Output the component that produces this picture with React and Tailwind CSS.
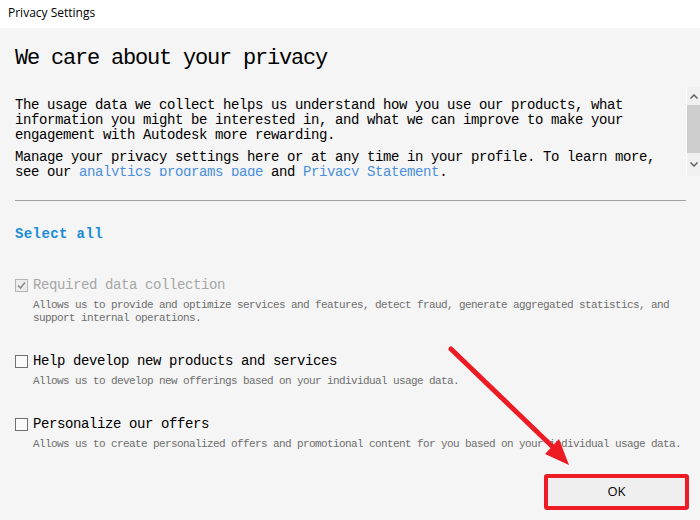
import React from "react";

const mono = { fontFamily: '"Liberation Mono", "DejaVu Sans Mono", monospace' };

function Check({ checked, disabled }) {
  return (
    <div
      className={
        "w-[13px] h-[13px] shrink-0 border flex items-center justify-center " +
        (disabled ? "border-[#b4b4b4] bg-[#ececec]" : "border-[#707070] bg-[#fafafa]")
      }
    >
      {checked && (
        <svg width="9" height="9" viewBox="0 0 9 9">
          <path d="M1 4.5 L3.5 7 L8 1.5" fill="none" stroke="#8c8c8c" strokeWidth="1.6" />
        </svg>
      )}
    </div>
  );
}

function Row({ label, desc, checked, disabled, className, descClass }) {
  return (
    <div className={className}>
      <div className="flex items-center gap-[5px]">
        <Check checked={checked} disabled={disabled} />
        <span
          className={
            "text-[14px] leading-[16px] tracking-[-0.4px] whitespace-pre " +
            (disabled ? "text-[#a6a6a6]" : "text-black")
          }
          style={mono}
        >
          {label}
        </span>
      </div>
      <div className={"pl-[18px] " + descClass}>
        {desc.map((d, i) => (
          <div
            key={i}
            className="text-[11px] leading-[13px] tracking-[-0.6px] text-[#6e6e6e] whitespace-pre"
            style={mono}
          >
            {d}
          </div>
        ))}
      </div>
    </div>
  );
}

export default function App() {
  const link = "text-[#4a8fdc]";
  return (
    <div className="w-[700px] h-[520px] relative overflow-hidden bg-[#f5f5f5]">
      <div className="h-[28px] bg-white flex items-center pl-[8px] pb-[2px]">
        <span
          className="text-[12px] text-black"
          style={{ fontFamily: '"Open Sans", "Noto Sans", sans-serif' }}
        >
          Privacy Settings
        </span>
      </div>

      <div className="pl-[15px]">
        <div
          className="mt-[19px] text-[22px] leading-[24px] tracking-[-1.2px] text-black whitespace-pre"
          style={mono}
        >
          We care about your privacy
        </div>

        <div className="mt-[16px] h-[89px] flex overflow-hidden">
          <div
            className="flex-1 pt-[11px] text-[14px] leading-[15px] tracking-[-0.4px] text-black overflow-hidden"
            style={mono}
          >
            <div className="whitespace-pre">
              The usage data we collect helps us understand how you use our products, what
            </div>
            <div className="whitespace-pre">
              information you might be interested in, and what we can improve to make your
            </div>
            <div className="whitespace-pre">engagement with Autodesk more rewarding.</div>
            <div className="mt-[7px] whitespace-pre">
              Manage your privacy settings here or at any time in your profile. To learn more,
            </div>
            <div className="whitespace-pre">
              see our <span className={link}>analytics programs page</span> and{" "}
              <span className={link}>Privacy Statement</span>.
            </div>
          </div>
          <div className="w-[14px] h-[89px] bg-[#f0f0f0] border-l border-white flex flex-col">
            <div className="h-[18px] flex items-center justify-center">
              <svg width="8" height="5" viewBox="0 0 8 5">
                <path d="M0.5 4.5 L4 1 L7.5 4.5" fill="none" stroke="#606060" strokeWidth="1.5" />
              </svg>
            </div>
            <div className="h-[48px] bg-[#cdcdcd]" />
            <div className="flex-1 flex items-center justify-center">
              <svg width="8" height="5" viewBox="0 0 8 5">
                <path d="M0.5 0.5 L4 4 L7.5 0.5" fill="none" stroke="#606060" strokeWidth="1.5" />
              </svg>
            </div>
          </div>
        </div>

        <div className="mt-[24px] mr-[14px] h-px bg-[#a0a0a0]" />

        <div
          className="mt-[26px] text-[14px] leading-[15px] tracking-[0.4px] font-bold text-[#1a8cd8]"
          style={mono}
        >
          Select all
        </div>

        <Row
          className="mt-[35px]"
          descClass="mt-[6px]"
          label="Required data collection"
          checked
          disabled
          desc={[
            "Allows us to provide and optimize services and features, detect fraud, generate aggregated statistics, and",
            "support internal operations.",
          ]}
        />
        <Row
          className="mt-[28px]"
          descClass="mt-[6px]"
          label="Help develop new products and services"
          desc={["Allows us to develop new offerings based on your individual usage data."]}
        />
        <Row
          className="mt-[28px]"
          descClass="mt-[6px]"
          label="Personalize our offers"
          desc={[
            "Allows us to create personalized offers and promotional content for you based on your individual usage data.",
          ]}
        />

        <div className="mt-[23px] flex justify-end pr-[11px]">
          <div className="w-[145px] h-[36px] border-4 border-[#ed1c24] rounded-[3px] bg-[#efefef] flex items-center justify-center">
            <span
              className="text-[13px] text-black"
              style={{ fontFamily: '"Open Sans", "Noto Sans", sans-serif' }}
            >
              OK
            </span>
          </div>
        </div>
      </div>

      <svg
        className="absolute left-0 top-0 pointer-events-none"
        width="700"
        height="520"
        viewBox="0 0 700 520"
      >
        <line x1="451" y1="349" x2="557" y2="451" stroke="#ed1c24" strokeWidth="5" strokeLinecap="round" />
        <polygon points="569,465 545,454 559,439" fill="#ed1c24" />
      </svg>
    </div>
  );
}
